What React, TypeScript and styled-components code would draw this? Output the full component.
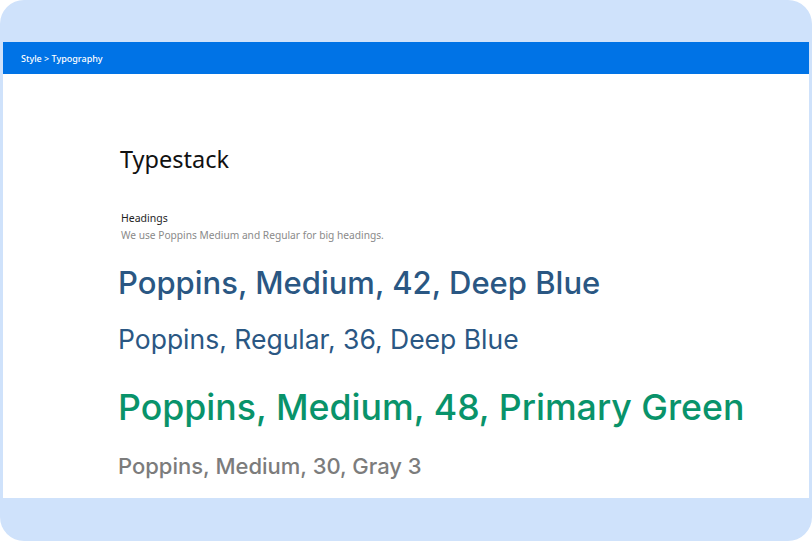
import styled, { createGlobalStyle } from 'styled-components';

const GlobalStyle = createGlobalStyle`
  html, body {
    margin: 0;
    padding: 0;
    background: #ffffff;
  }
  body {
    font-family: 'Open Sans', 'Liberation Sans', sans-serif;
  }
`;

const Frame = styled.div`
  width: 812px;
  height: 541px;
  box-sizing: border-box;
  background: #cfe2fb;
  border-radius: 24px;
  padding: 42px 3px 43px 3px;
  display: flex;
  flex-direction: column;
  overflow: hidden;
`;

const Crumbs = styled.div`
  height: 32px;
  flex: none;
  background: #0073e6;
  display: flex;
  align-items: center;
  padding-left: 18px;
  color: #ffffff;
  font-family: 'Noto Sans', 'Open Sans', sans-serif;
  font-size: 9px;
  font-weight: 500;
`;

const Sheet = styled.div`
  flex: 1;
  background: #ffffff;
  padding: 70px 0 0 115px;
  display: flex;
  flex-direction: column;
`;

const Title = styled.h1`
  margin: 0;
  font-family: 'Noto Sans', 'Open Sans', sans-serif;
  font-weight: 400;
  font-size: 23.5px;
  line-height: 30px;
  color: #111111;
  padding-left: 2px;
`;

const Label = styled.div`
  margin-top: 36px;
  padding-left: 3px;
  font-family: 'Noto Sans', 'Open Sans', sans-serif;
  font-size: 10.5px;
  line-height: 16px;
  color: #1e1e1e;
`;

const Note = styled.div`
  padding-left: 3px;
  font-family: 'Noto Sans', 'Open Sans', sans-serif;
  font-size: 10.2px;
  line-height: 19px;
  color: #8a8a8a;
`;

const Sample = styled.div<{ $size: number; $weight: number; $color: string; $gap: number }>`
  margin-top: ${(p) => p.$gap}px;
  font-family: 'Inter', 'DejaVu Sans', sans-serif;
  font-size: ${(p) => p.$size}px;
  font-weight: ${(p) => p.$weight};
  line-height: 1.2;
  color: ${(p) => p.$color};
  white-space: nowrap;
`;

export default function App() {
  return (
    <>
      <GlobalStyle />
      <Frame>
        <Crumbs>Style &gt; Typography</Crumbs>
        <Sheet>
          <Title>Typestack</Title>
          <Label>Headings</Label>
          <Note>We use Poppins Medium and Regular for big headings.</Note>
          <Sample $size={31} $weight={500} $color="#2a5783" $gap={19}>
            Poppins, Medium, 42, Deep Blue
          </Sample>
          <Sample $size={26.5} $weight={400} $color="#2a5783" $gap={23}>
            Poppins, Regular, 36, Deep Blue
          </Sample>
          <Sample $size={35.7} $weight={500} $color="#09936a" $gap={30}>
            Poppins, Medium, 48, Primary Green
          </Sample>
          <Sample $size={22} $weight={500} $color="#7c7c7c" $gap={24}>
            Poppins, Medium, 30, Gray 3
          </Sample>
        </Sheet>
      </Frame>
    </>
  );
}
